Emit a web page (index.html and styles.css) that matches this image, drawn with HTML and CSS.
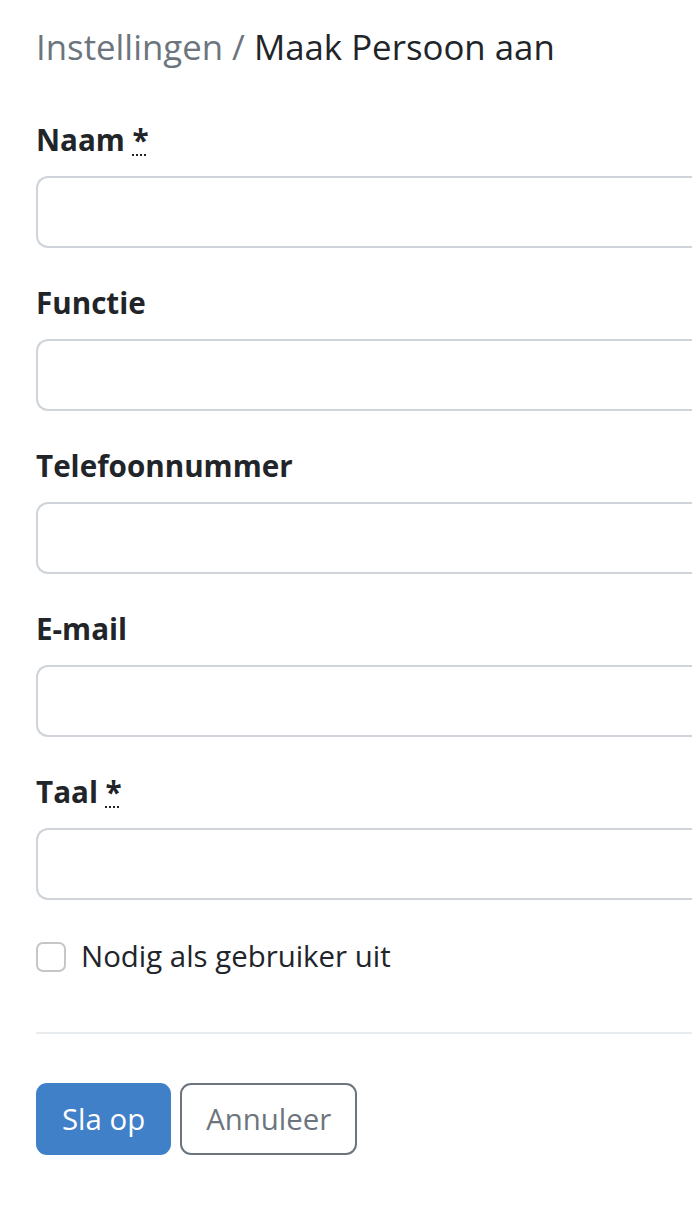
FILE: index.html
```html
<!DOCTYPE html>
<html lang="nl">
<head>
    <meta charset="UTF-8">
    <meta name="viewport" content="width=device-width, initial-scale=1.0">
    <title>Maak Persoon aan</title>
    <link rel="stylesheet" href="styles.css">
</head>
<body>
    <div class="page">
        <h1 class="title"><span class="crumb">Instellingen /</span> Maak Persoon aan</h1>

        <form class="person-form">
            <div class="field">
                <label for="naam">Naam <abbr title="verplicht">*</abbr></label>
                <input type="text" id="naam">
            </div>
            <div class="field">
                <label for="functie">Functie</label>
                <input type="text" id="functie">
            </div>
            <div class="field">
                <label for="telefoon">Telefoonnummer</label>
                <input type="text" id="telefoon">
            </div>
            <div class="field">
                <label for="email">E-mail</label>
                <input type="text" id="email">
            </div>
            <div class="field">
                <label for="taal">Taal <abbr title="verplicht">*</abbr></label>
                <input type="text" id="taal">
            </div>

            <label class="check-row">
                <span class="check-box"></span>
                Nodig als gebruiker uit
            </label>

            <hr class="divider">

            <div class="actions">
                <button type="button" class="btn btn-primary">Sla op</button>
                <button type="button" class="btn btn-outline">Annuleer</button>
            </div>
        </form>
    </div>
</body>
</html>
```

FILE: styles.css
```css
:root {
    --text-color: #212529;
    --muted: #6c757d;
    --border: #ced4da;
    --primary: #3f80c8;
}

* {
    box-sizing: border-box;
    margin: 0;
    padding: 0;
}

body {
    font-family: "Open Sans", "Noto Sans", sans-serif;
    color: var(--text-color);
    background: white;
    overflow: hidden;
}

.page {
    padding: 26px 0 0 36px;
}

.title {
    font-size: 34.8px;
    font-weight: 400;
    line-height: 42px;
    margin-bottom: 51px;
}

.crumb {
    color: var(--muted);
}

.field {
    margin-bottom: 34px;
}

.field label {
    display: block;
    font-size: 29.6px;
    font-weight: 700;
    line-height: 42px;
    margin-bottom: 15px;
}

abbr {
    text-decoration: underline dotted;
    text-decoration-thickness: 2px;
    text-underline-offset: 3px;
}

/* the field runs on past the right edge of the window */
.field input {
    display: block;
    width: 100%;
    height: 72px;
    border: 2px solid var(--border);
    border-right: none;
    border-radius: 12px 0 0 12px;
    background: white;
    font: inherit;
}

.check-row {
    display: flex;
    align-items: center;
    gap: 15px;
    font-size: 29.4px;
    line-height: 45px;
    margin-top: 1px;
}

.check-box {
    width: 30px;
    height: 30px;
    border: 2px solid #c6c6c6;
    border-radius: 7px;
}

.divider {
    border: none;
    border-top: 2px solid #e9ecef;
    margin: 53px 0 49px;
}

.actions {
    display: flex;
    gap: 9px;
}

.btn {
    height: 72px;
    font-family: inherit;
    font-size: 29.4px;
    padding: 0 24px;
    border-radius: 11px;
    border: 2px solid transparent;
}

.btn-primary {
    background: var(--primary);
    border-color: var(--primary);
    color: white;
}

.btn-outline {
    background: white;
    border-color: var(--muted);
    color: var(--muted);
}
```
